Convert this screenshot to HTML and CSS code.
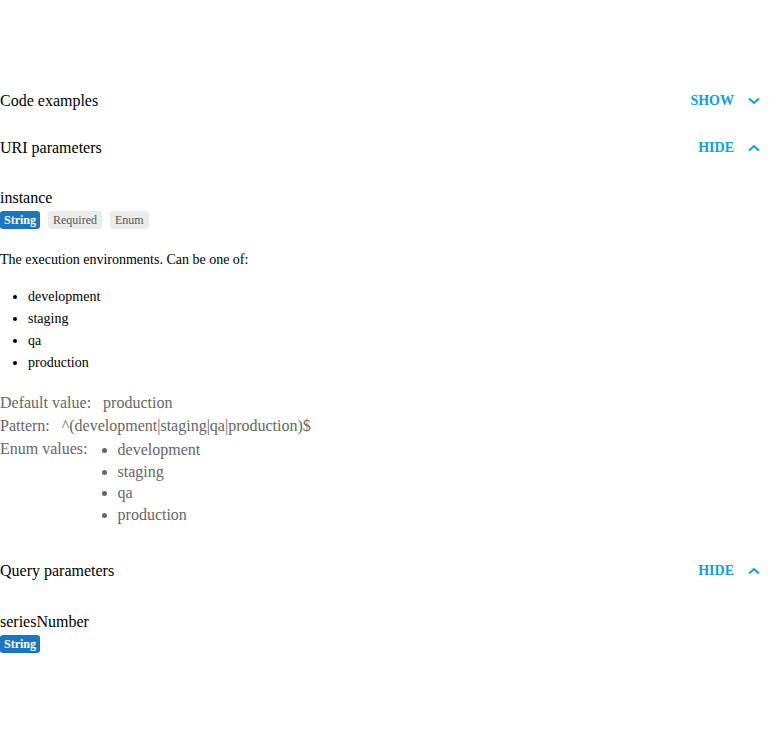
FILE: index.html
```html
<!DOCTYPE html>
<html>
<head>
<meta charset="utf-8">
<link rel="stylesheet" href="styles.css">
</head>
<body>
<div class="page">
  <div class="section-head">
    <span class="section-title">Code examples</span>
    <button class="toggle">SHOW
      <svg class="chev" width="12" height="8" viewBox="0 0 12 8"><path d="M1 1.5 L6 6 L11 1.5" fill="none" stroke="currentColor" stroke-width="2"/></svg>
    </button>
  </div>
  <div class="section-head">
    <span class="section-title">URI parameters</span>
    <button class="toggle">HIDE
      <svg class="chev" width="12" height="8" viewBox="0 0 12 8"><path d="M1 6.5 L6 2 L11 6.5" fill="none" stroke="currentColor" stroke-width="2"/></svg>
    </button>
  </div>

  <div class="param">
    <div class="param-name">instance</div>
    <div class="badges">
      <span class="badge badge-type">String</span>
      <span class="badge badge-flag">Required</span>
      <span class="badge badge-flag">Enum</span>
    </div>
    <p class="desc">The execution environments. Can be one of:</p>
    <ul class="desc-list">
      <li>development</li>
      <li>staging</li>
      <li>qa</li>
      <li>production</li>
    </ul>
    <div class="props">
      <div class="prop"><span class="prop-label">Default value:</span><span class="prop-value">production</span></div>
      <div class="prop"><span class="prop-label">Pattern:</span><span class="prop-value">^(development|staging|qa|production)$</span></div>
      <div class="prop"><span class="prop-label">Enum values:</span>
        <ul class="enum-list">
          <li>development</li>
          <li>staging</li>
          <li>qa</li>
          <li>production</li>
        </ul>
      </div>
    </div>
  </div>

  <div class="section-head section-gap">
    <span class="section-title">Query parameters</span>
    <button class="toggle">HIDE
      <svg class="chev" width="12" height="8" viewBox="0 0 12 8"><path d="M1 6.5 L6 2 L11 6.5" fill="none" stroke="currentColor" stroke-width="2"/></svg>
    </button>
  </div>

  <div class="param">
    <div class="param-name">seriesNumber</div>
    <div class="badges">
      <span class="badge badge-type">String</span>
    </div>
  </div>
</div>
</body>
</html>
```
FILE: styles.css
```css
html, body {
  margin: 0;
  padding: 0;
  background: #ffffff;
}
body {
  font-family: "Liberation Serif", "Times New Roman", serif;
  color: #000;
}
.page {
  padding-top: 77px;
  padding-right: 24px;
}
.section-head {
  display: flex;
  align-items: center;
  justify-content: space-between;
  height: 47px;
  font-size: 16px;
}
.section-gap {
  margin-top: 22px;
}
.toggle {
  display: flex;
  align-items: center;
  gap: 14px;
  border: 0;
  background: none;
  padding: 0;
  font-family: "Liberation Serif", "Times New Roman", serif;
  font-size: 14px;
  font-weight: bold;
  color: #0a9fdb;
  cursor: pointer;
}
.chev {
  display: block;
}
.param {
  margin-top: 17px;
}
.param-name {
  font-size: 16px;
  line-height: 20px;
}
.badges {
  display: flex;
  gap: 8px;
  margin-top: 3px;
}
.badge {
  display: inline-block;
  font-size: 12px;
  line-height: 18px;
  height: 18px;
  padding: 0 4px;
  border-radius: 3px;
}
.badge-type {
  background: #1b75c1;
  color: #fff;
  font-weight: bold;
}
.badge-flag {
  background: #ececec;
  color: #555;
  padding: 0 5px;
}
.desc {
  font-size: 14px;
  line-height: 20px;
  margin: 21px 0 0;
}
.desc-list {
  margin: 16px 0 0;
  padding-left: 28px;
  font-size: 14px;
  line-height: 22px;
}
.props {
  margin-top: 17px;
  color: #666;
  font-size: 16px;
  line-height: 23px;
}
.prop {
  display: flex;
  align-items: flex-start;
}
.prop-value {
  margin-left: 12px;
}
.enum-list {
  margin: 2px 0 0 12px;
  padding-left: 18px;
  line-height: 21.7px;
}
```
